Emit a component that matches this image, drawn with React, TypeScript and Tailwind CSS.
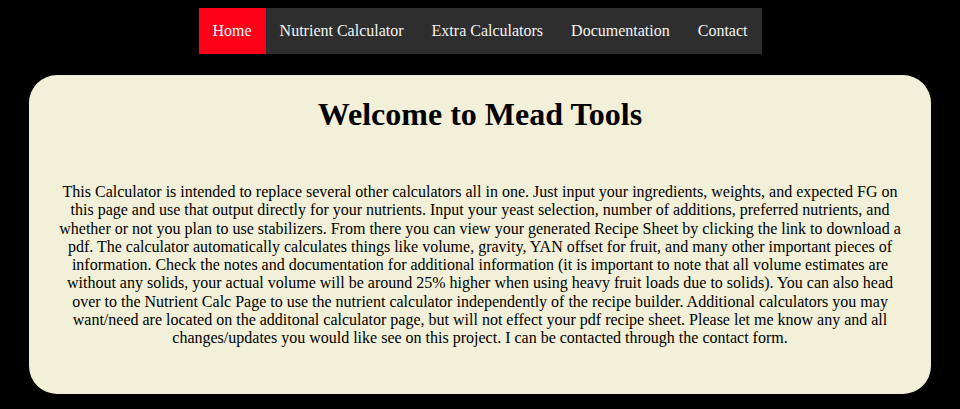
const navItems = ['Home', 'Nutrient Calculator', 'Extra Calculators', 'Documentation', 'Contact'];

export default function App() {
  return (
    <div className="min-h-screen bg-black font-['Liberation_Serif',serif] text-black">
      <nav className="flex justify-center pt-2">
        <ul className="flex bg-[#2e2e2e]">
          {navItems.map((item, i) => (
            <li
              key={item}
              className={`flex h-[46px] items-center px-[14px] text-base ${
                i === 0 ? 'bg-[#ff0019] text-white' : 'text-[#f4f4f4]'
              }`}
            >
              {item}
            </li>
          ))}
        </ul>
      </nav>

      <main className="mx-[29px] mt-[21px] rounded-[28px] bg-[#f2f0d8] px-[26px] pb-[46px]">
        <h1 className="pt-[21px] text-center text-[32px] font-bold leading-[37px]">Welcome to Mead Tools</h1>
        <p className="mt-[50px] text-center text-base leading-[18.3px]">
          This Calculator is intended to replace several other calculators all in one. Just input your ingredients,
          weights, and expected FG on this page and use that output directly for your nutrients. Input your yeast
          selection, number of additions, preferred nutrients, and whether or not you plan to use stabilizers. From
          there you can view your generated Recipe Sheet by clicking the link to download a pdf. The calculator
          automatically calculates things like volume, gravity, YAN offset for fruit, and many other important pieces
          of information. Check the notes and documentation for additional information (it is important to note that
          all volume estimates are without any solids, your actual volume will be around 25% higher when using heavy
          fruit loads due to solids). You can also head over to the Nutrient Calc Page to use the nutrient calculator
          independently of the recipe builder. Additional calculators you may want/need are located on the additonal
          calculator page, but will not effect your pdf recipe sheet. Please let me know any and all changes/updates
          you would like see on this project. I can be contacted through the contact form.
        </p>
      </main>
    </div>
  );
}
